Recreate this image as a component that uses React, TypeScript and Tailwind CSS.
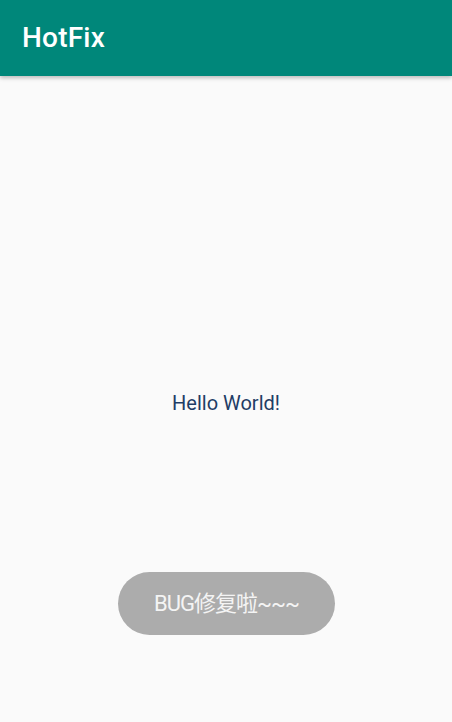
export default function App() {
  return (
    <div className="relative flex h-[722px] w-[452px] flex-col overflow-hidden bg-[#fafafa] font-['Roboto','Noto_Sans_CJK_SC',sans-serif]">
      <header className="z-10 flex h-[76px] shrink-0 items-center bg-[#00877a] px-[22px] shadow-[0_2px_4px_rgba(0,0,0,0.25)]">
        <h1 className="text-[28px] font-medium leading-none tracking-[0.2px] text-white">HotFix</h1>
      </header>
      <main className="flex flex-1 items-center justify-center pt-[8px]">
        <p className="text-[20px] text-[#1f3d66]">Hello World!</p>
      </main>
      <div className="absolute bottom-[87px] left-[118px] flex h-[63px] w-[217px] items-center justify-center rounded-full bg-[#acacac]">
        <span className="text-[22px] tracking-[-1px] text-[#f4f4f4]">BUG修复啦~~~</span>
      </div>
    </div>
  );
}
